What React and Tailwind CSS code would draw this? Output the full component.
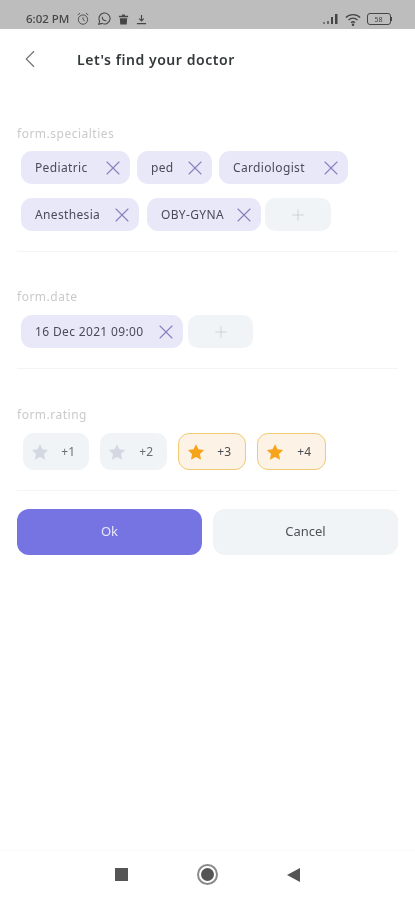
import React from 'react';
import { ChevronLeft, X, Plus } from 'lucide-react';

function Chip({ label, width }) {
  return (
    <div
      className={`flex h-[33px] items-center justify-between rounded-[11px] bg-[#e9e8f9] pl-[14px] pr-[5px] ${width}`}
    >
      <span className="text-[12px] tracking-[0.35px] text-[#4a4a5a]">{label}</span>
      <X size={24} strokeWidth={1.1} className="text-[#8482bd]" />
    </div>
  );
}

function AddChip({ width }) {
  return (
    <div className={`flex h-[33px] items-center justify-center rounded-[10px] bg-[#f1f4f6] ${width}`}>
      <Plus size={18} strokeWidth={1} className="text-[#c4cad0]" />
    </div>
  );
}

function Star({ color }) {
  return (
    <svg width="18" height="18" viewBox="0 0 24 24" fill={color}>
      <path d="M12 1.500l3.300 6.900 7.600 1-5.600 5.200 1.500 7.600L12 18.500l-6.800 3.700 1.500-7.600L1.100 9.400l7.600-1z" />
    </svg>
  );
}

function Rating({ value, active, width }) {
  return (
    <div
      className={`flex h-[37px] items-center justify-between rounded-[11px] pl-[8px] pr-[14px] ${width} ${
        active ? 'border-[1.5px] border-[#efcb72] bg-[#fdf2e6]' : 'bg-[#f1f4f7]'
      }`}
    >
      <Star color={active ? '#f7a41d' : '#d3d8e2'} />
      <span className={`text-[12px] ${active ? 'text-[#4a4d52]' : 'text-[#6b6f75]'}`}>{value}</span>
    </div>
  );
}

function Section({ label, children }) {
  return (
    <div className="mx-[17px] border-b border-[#f3f4f5]">
      <div className="text-[12px] leading-[16px] tracking-[0.5px] text-[#c9cacc]">{label}</div>
      {children}
    </div>
  );
}

export default function App() {
  return (
    <div
      className="flex h-[900px] w-[415px] flex-col bg-white blur-[0.5px]"
      style={{ fontFamily: '"Noto Sans", sans-serif' }}
    >
      {/* Status bar */}
      <div className="flex h-[29px] items-center justify-between bg-[#bdbdbd] pl-[26px] pr-[23px] pt-[9px]">
        <div className="flex items-center gap-[7px] text-[#454545]">
          <span className="text-[11.500px] font-medium">6:02 PM</span>
          <svg width="14" height="14" viewBox="0 0 24 24" fill="none" stroke="currentColor" strokeWidth="1.500">
            <circle cx="12" cy="13" r="8" />
            <path d="M12 9v4l3 2M3 5l4-3M21 5l-4-3" />
          </svg>
          <svg width="14" height="14" viewBox="0 0 24 24" fill="none" stroke="currentColor" strokeWidth="1.800">
            <path d="M3 21l1.500-5.500A9.500 9.500 0 1 1 8.500 19.500z" />
            <path d="M9 8c0 4 3 7 7 7" />
          </svg>
          <svg width="11" height="13" viewBox="0 0 24 24" fill="currentColor">
            <path d="M9 1h6v3h7v3H2V4h7zM4 9h16l-1 14H5z" />
          </svg>
          <svg width="11" height="11" viewBox="0 0 24 24" fill="none" stroke="currentColor" strokeWidth="2.500">
            <path d="M12 2v13M7 10l5 5 5-5M2 21h20" />
          </svg>
        </div>
        <div className="flex items-center gap-[6px] text-[#454545]">
          <svg width="16" height="12" viewBox="0 0 16 12" fill="currentColor">
            <rect x="0" y="9" width="2" height="2" opacity="0.6" />
            <rect x="4" y="8" width="2" height="3" opacity="0.7" />
            <rect x="8" y="4" width="2" height="7" />
            <rect x="12" y="1" width="2.500" height="10" />
          </svg>
          <svg width="16" height="13" viewBox="0 0 24 20" fill="none" stroke="currentColor" strokeWidth="2">
            <path d="M1 7c6-6 16-6 22 0M5 11c4-4 10-4 14 0M9 15c2-2 4-2 6 0" />
            <circle cx="12" cy="18" r="1" fill="currentColor" />
          </svg>
          <div className="flex items-center">
            <div className="flex h-[12px] w-[24px] items-center justify-center rounded-[3px] border border-[#454545] text-[7px] leading-none">
              58
            </div>
            <div className="h-[4px] w-[1.500px] bg-[#454545]" />
          </div>
        </div>
      </div>

      {/* Header */}
      <div className="flex h-[60px] items-center pl-[15px]">
        <ChevronLeft size={30} strokeWidth={0.9} className="text-[#6f7378]" />
        <span className="ml-[32px] text-[14px] font-semibold tracking-[0.55px] text-[#333a3a]">
          Let's find your doctor
        </span>
      </div>

      <div className="mt-[37px]">
        <Section label="form.specialties">
          <div className="mt-[9px] flex flex-wrap pb-[20px] pl-[4px]">
            <div className="flex w-full gap-[7px]">
              <Chip label="Pediatric" width="w-[109px]" />
              <Chip label="ped" width="w-[75px]" />
              <Chip label="Cardiologist" width="w-[129px]" />
            </div>
            <div className="mt-[14px] flex w-full">
              <Chip label="Anesthesia" width="w-[118px]" />
              <div className="ml-[8px]">
                <Chip label="OBY-GYNA" width="w-[114px]" />
              </div>
              <div className="ml-[4px]">
                <AddChip width="w-[66px]" />
              </div>
            </div>
          </div>
        </Section>

        <div className="mt-[37px]">
          <Section label="form.date">
            <div className="flex gap-[5px] pb-[20px] pl-[4px] pt-[10px]">
              <Chip label="16 Dec 2021 09:00" width="w-[162px]" />
              <AddChip width="w-[65px]" />
            </div>
          </Section>
        </div>

        <div className="mt-[38px]">
          <Section label="form.rating">
            <div className="flex gap-[11px] pb-[20px] pl-[6px] pt-[10px]">
              <Rating value="+1" width="w-[66px]" />
              <Rating value="+2" width="w-[67px]" />
              <Rating value="+3" active width="w-[68px]" />
              <Rating value="+4" active width="w-[69px]" />
            </div>
          </Section>
        </div>

        {/* Actions */}
        <div className="mx-[17px] mt-[18px] flex gap-[11px]">
          <button className="h-[46px] w-[185px] rounded-[12px] bg-[#7674e3] text-[13px] text-[#e8e8fb]">
            Ok
          </button>
          <button className="h-[46px] w-[185px] rounded-[12px] bg-[#f1f4f7] text-[13px] text-[#4f5359]">
            Cancel
          </button>
        </div>
      </div>

      {/* Navigation bar */}
      <div className="mt-auto flex h-[50px] items-center justify-center border-t border-[#fafafa] pb-[2px]">
        <div className="flex w-[185px] items-center justify-between">
          <div className="h-[13px] w-[13px] bg-[#555]" />
          <div className="flex h-[21px] w-[21px] items-center justify-center rounded-full border-2 border-[#8a8a8a]">
            <div className="h-[13px] w-[13px] rounded-full bg-[#555]" />
          </div>
          <svg width="13" height="14" viewBox="0 0 13 14" fill="#555">
            <path d="M13 0v14L0 7z" />
          </svg>
        </div>
      </div>
    </div>
  );
}
